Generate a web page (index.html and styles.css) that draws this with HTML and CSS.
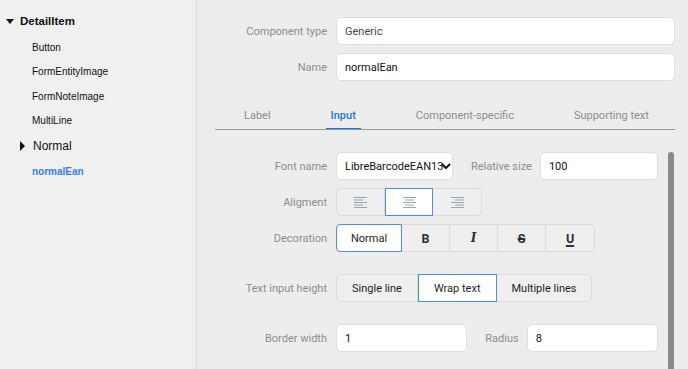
FILE: index.html
```html
<!DOCTYPE html>
<html lang="en">
<head>
    <meta charset="UTF-8">
    <title>Component editor</title>
    <link rel="stylesheet" href="styles.css">
</head>
<body>
<div class="app">
    <aside class="tree">
        <div class="node root">
            <span class="caret down"></span>DetailItem
        </div>
        <div class="leaf">Button</div>
        <div class="leaf">FormEntityImage</div>
        <div class="leaf">FormNoteImage</div>
        <div class="leaf">MultiLine</div>
        <div class="node group">
            <span class="caret right"></span>Normal
        </div>
        <div class="leaf selected">normalEan</div>
    </aside>

    <main class="editor">
        <div class="form top">
            <label class="lbl">Component type</label>
            <div class="field">Generic</div>
            <label class="lbl">Name</label>
            <div class="field dark">normalEan</div>
        </div>

        <div class="tabs">
            <div class="tab">Label</div>
            <div class="tab active">Input</div>
            <div class="tab">Component-specific</div>
            <div class="tab">Supporting text</div>
        </div>

        <div class="panel">
            <div class="thumb"></div>

            <div class="form">
                <label class="lbl">Font name</label>
                <div class="pair">
                    <div class="field select">
                        <span>LibreBarcodeEAN13</span>
                        <svg width="10" height="8" viewBox="0 0 10 8"><path d="M1 2 L5 6 L9 2" fill="none" stroke="#111" stroke-width="2"/></svg>
                    </div>
                    <label class="lbl inline">Relative size</label>
                    <div class="field grow dark">100</div>
                </div>

                <label class="lbl">Aligment</label>
                <div class="seg">
                    <div class="btn icon">
                        <svg width="13" height="11" viewBox="0 0 13 11"><path d="M0 .5h13M0 3h9M0 5.5h13M0 8h9M0 10.5h13" stroke="#9aa3b2" stroke-width="1.2"/></svg>
                    </div>
                    <div class="btn icon on">
                        <svg width="13" height="11" viewBox="0 0 13 11"><path d="M0 .5h13M2 3h9M0 5.5h13M2 8h9M0 10.5h13" stroke="#9aa3b2" stroke-width="1.2"/></svg>
                    </div>
                    <div class="btn icon">
                        <svg width="13" height="11" viewBox="0 0 13 11"><path d="M0 .5h13M4 3h9M0 5.5h13M4 8h9M0 10.5h13" stroke="#9aa3b2" stroke-width="1.2"/></svg>
                    </div>
                </div>

                <label class="lbl">Decoration</label>
                <div class="seg">
                    <div class="btn wide on">Normal</div>
                    <div class="btn deco b">B</div>
                    <div class="btn deco i">I</div>
                    <div class="btn deco s">S</div>
                    <div class="btn deco u">U</div>
                </div>

                <label class="lbl gap">Text input height</label>
                <div class="seg gap">
                    <div class="btn txt">Single line</div>
                    <div class="btn txt on">Wrap text</div>
                    <div class="btn txt">Multiple lines</div>
                </div>

                <label class="lbl gap">Border width</label>
                <div class="pair gap">
                    <div class="field grow dark">1</div>
                    <label class="lbl inline">Radius</label>
                    <div class="field grow dark">8</div>
                </div>
            </div>
        </div>
    </main>
</div>
</body>
</html>
```

FILE: styles.css
```css
* {
    margin: 0;
    padding: 0;
    box-sizing: border-box;
}

body {
    font-family: Roboto, "Liberation Sans", sans-serif;
    background: #ededed;
}

.app {
    display: flex;
    width: 688px;
    height: 369px;
    overflow: hidden;
}

/* left tree */
.tree {
    width: 197px;
    flex: none;
    background: #f0f0f0;
    border-right: 1px solid #d9d9d9;
    padding-top: 13px;
    font-family: "Liberation Sans", Arial, sans-serif;
    font-size: 10px;
    color: #111;
}

.tree .node,
.tree .leaf {
    height: 24.5px;
    display: flex;
    align-items: center;
}

.tree .leaf {
    padding-left: 32px;
}

.tree .root {
    padding-left: 6px;
    font-weight: bold;
    font-size: 11.5px;
    height: 16px;
    margin-bottom: 6px;
}

.tree .group {
    padding-left: 20px;
    font-size: 12px;
    height: 26px;
}

.tree .selected {
    color: #3b7cf4;
    font-weight: bold;
}

.caret {
    display: inline-block;
    width: 0;
    height: 0;
    margin-right: 6px;
}

.caret.down {
    border-left: 4.5px solid transparent;
    border-right: 4.5px solid transparent;
    border-top: 5px solid #111;
}

.caret.right {
    border-top: 5px solid transparent;
    border-bottom: 5px solid transparent;
    border-left: 5px solid #111;
    margin-right: 8px;
}

/* right editor */
.editor {
    flex: 1;
    min-width: 0;
    padding: 17px 13px 0 0;
    font-size: 11px;
}

.form {
    display: grid;
    grid-template-columns: 130px 1fr;
    column-gap: 9px;
    row-gap: 8px;
    align-items: center;
}

.lbl {
    text-align: right;
    color: #8c8c8c;
}

.lbl.inline {
    margin: 0 8px 0 18px;
}

.field {
    height: 28px;
    background: #fff;
    border: 1px solid #dedede;
    border-radius: 5px;
    display: flex;
    align-items: center;
    padding-left: 8px;
    color: #444;
}

.field.dark {
    color: #111;
}

.grow {
    flex: 1;
}

.select {
    width: 117px;
    color: #111;
    overflow: hidden;
    white-space: nowrap;
}

.select svg {
    margin-left: -2px;
    flex: none;
}

.pair {
    display: flex;
    align-items: center;
}

/* tabs */
.tabs {
    display: flex;
    margin: 23px 0 0 18px;
    padding-left: 24px;
    border-bottom: 1px solid #999;
    white-space: nowrap;
    overflow: hidden;
}

.tab {
    padding: 5px;
    line-height: 14px;
    margin: 0 50px -1px 0;
    color: #8c8c8c;
    border-bottom: 2px solid transparent;
}

.tab:last-child {
    margin-right: 0;
}

.tab.active {
    color: #1a73e8;
    border-bottom-color: #1a73e8;
    font-weight: 500;
}

/* lower panel */
.panel {
    position: relative;
    padding: 22px 17px 0 0;
    height: 239px;
}

.thumb {
    position: absolute;
    right: 1px;
    top: 22px;
    bottom: 0;
    width: 6px;
    background: #8a8a8a;
    border-radius: 3px 3px 0 0;
}

.seg {
    display: flex;
    justify-self: start;
    border: 1px solid #dcdcdc;
    border-radius: 5px;
    background: #efefef;
    height: 28px;
}

.btn {
    display: flex;
    align-items: center;
    justify-content: center;
    border-right: 1px solid #dcdcdc;
    color: #1d1d1d;
    font-size: 11px;
}

.btn:last-child {
    border-right: none;
}

.btn.on {
    background: #fff;
    border: 1.5px solid #4a90e2;
    margin: -1px 0;
}

.btn.on:first-child {
    margin-left: -1px;
    border-radius: 4px 0 0 4px;
}

.btn.icon {
    width: 48px;
}

.btn.wide {
    width: 66px;
}

.btn.deco {
    width: 48px;
    font-weight: bold;
    font-size: 12.5px;
    color: #2a3140;
}

.deco.i {
    font-style: italic;
    font-family: "DejaVu Serif", serif;
    font-size: 12px;
}

.deco.s {
    text-decoration: line-through;
    text-decoration-thickness: 1.5px;
}

.deco.u {
    text-decoration: underline;
    text-decoration-thickness: 1.5px;
    text-underline-offset: 2px;
}

.btn.txt {
    padding: 0 15px;
}

.gap {
    margin-top: 14px;
}
```
